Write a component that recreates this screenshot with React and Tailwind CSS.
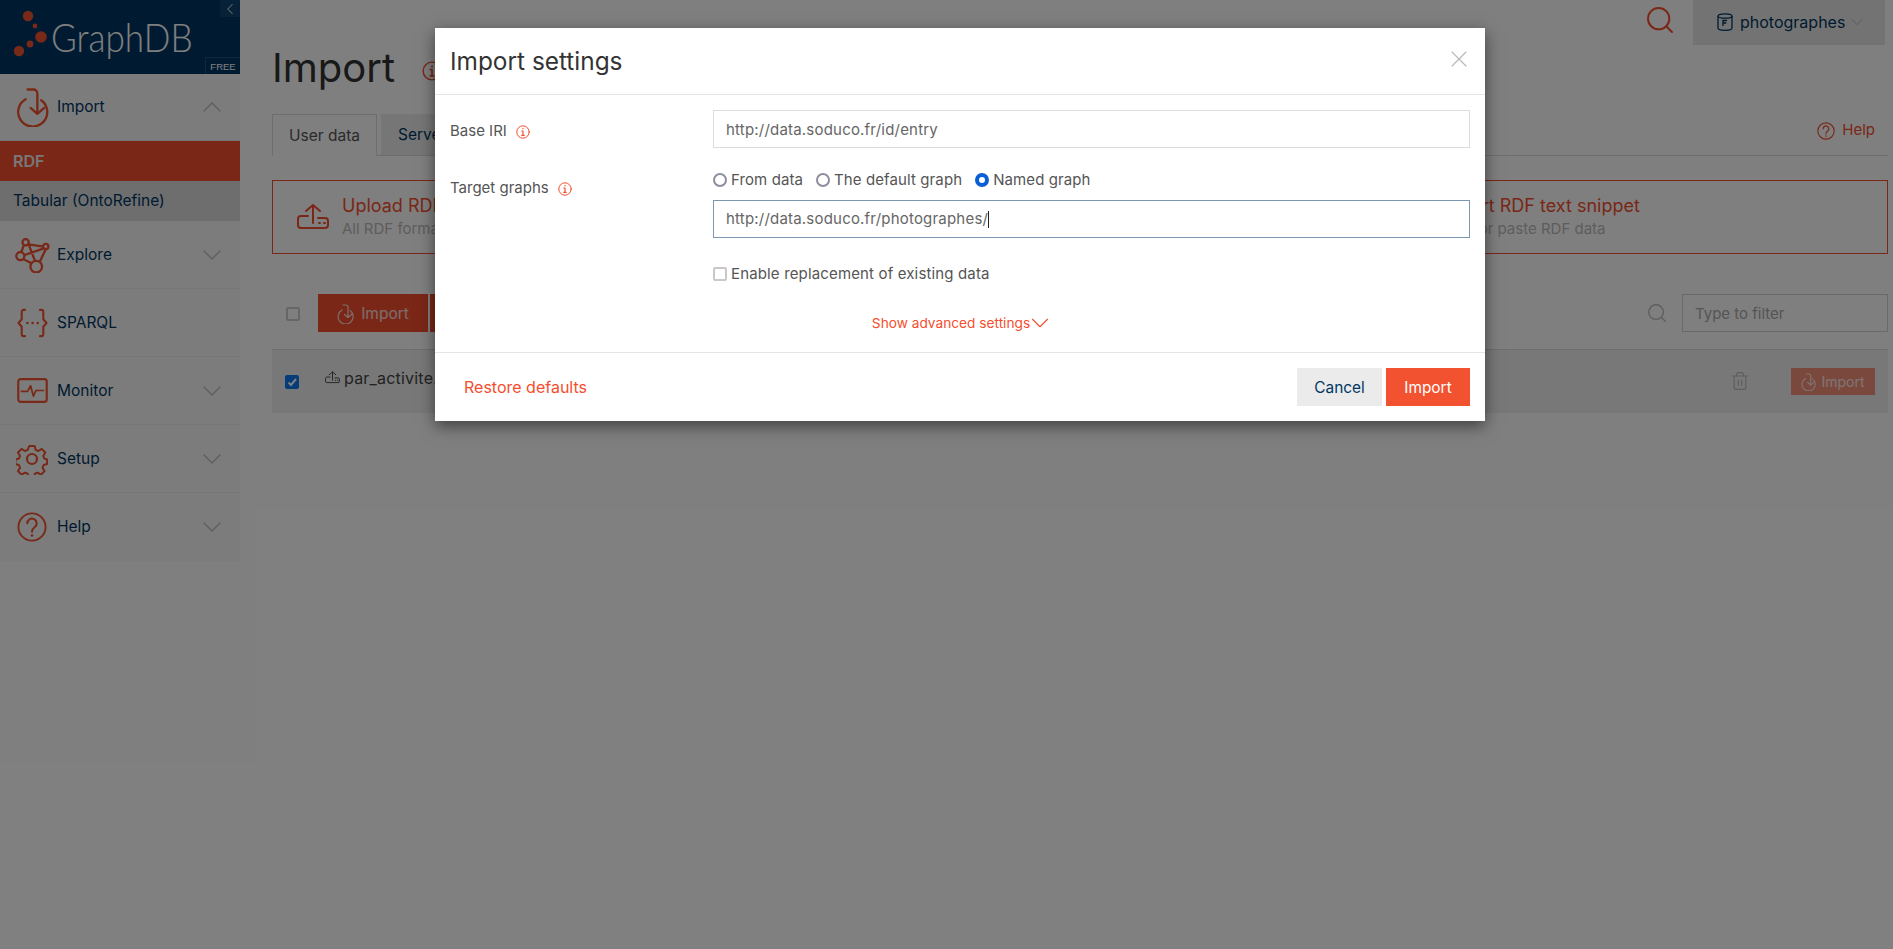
import { ChevronDown, ChevronUp, ChevronLeft, Search, X, Trash2 } from "lucide-react"

const ImportIcon = ({ className }) => (
    <svg className={className} viewBox="0 0 34 40" fill="none" stroke="currentColor" strokeWidth="2.4" strokeLinecap="round" strokeLinejoin="round">
        <path d="M10 12 A15 15 0 1 0 26 13" />
        <path d="M12 2 h6 a4 4 0 0 1 4 4 v20" />
        <path d="M15 21 l7 6 l7 -6" />
    </svg>
)

const UploadIcon = ({ className }) => (
    <svg className={className} viewBox="0 0 32 28" fill="none" stroke="currentColor" strokeWidth="2" strokeLinecap="round" strokeLinejoin="round">
        <path d="M16 20 V2 M9 8 l7 -6 l7 6" />
        <path d="M11 13 H4 a3 3 0 0 0 -3 3 v6 a3 3 0 0 0 3 3 h24 a3 3 0 0 0 3 -3 v-4 a3 3 0 0 0 -3 -3 h-7" />
        <path d="M22 20 h1 M27 20 h1" />
    </svg>
)

const InfoIcon = ({ className }) => (
    <svg className={className} viewBox="0 0 14 14" fill="none" stroke="currentColor" strokeWidth="1" strokeLinecap="round">
        <circle cx="7" cy="7" r="6.2" />
        <path d="M7 6 v4 M5.8 10.4 h2.4 M5.8 6 h1.2" strokeWidth="1.2" />
        <circle cx="7" cy="3.8" r="0.7" fill="currentColor" stroke="none" />
    </svg>
)

const ExploreIcon = ({ className }) => (
    <svg className={className} viewBox="0 0 34 34" fill="none" stroke="currentColor" strokeWidth="2.2">
        <circle cx="11" cy="5" r="3" />
        <circle cx="30" cy="9" r="2.5" />
        <circle cx="6" cy="18" r="3.8" />
        <circle cx="21" cy="28" r="5.5" />
        <path d="M13.5 7 L28 9 M9 8 L7 14.5 M13.5 6 L20 23 M27.5 11 L10 17 M30 11.5 L24 24 M9 21 L17 25" />
    </svg>
)

const SparqlIcon = ({ className }) => (
    <svg className={className} viewBox="0 0 34 32" fill="none" stroke="currentColor" strokeWidth="2.2" strokeLinecap="round" strokeLinejoin="round">
        <path d="M9 2 H7.5 a2 2 0 0 0 -2 2 v8 l-3.5 4 l3.5 4 v8 a2 2 0 0 0 2 2 H9" />
        <path d="M25 2 h1.5 a2 2 0 0 1 2 2 v8 l3.5 4 l-3.500 4 v8 a2 2 0 0 1 -2 2 H25" />
        <path d="M11.5 16 h.1 M17 16 h.1 M22.5 16 h.1" strokeWidth="2.6" />
    </svg>
)

const MonitorIcon = ({ className }) => (
    <svg className={className} viewBox="0 0 32 26" fill="none" stroke="currentColor" strokeWidth="2.2" strokeLinecap="round" strokeLinejoin="round">
        <rect x="1.2" y="1.2" width="29.6" height="23.6" rx="2.5" />
        <path d="M4.5 14 h6.5 l3 -6 l3 11 l2.5 -6 h8" strokeWidth="1.8" />
    </svg>
)

const GearIcon = ({ className }) => (
    <svg className={className} viewBox="0 0 32 32" fill="none" stroke="currentColor" strokeWidth="2.2" strokeLinejoin="round">
        <circle cx="16" cy="16" r="5" />
        <path d="M13 1.500 h6 l1 4.300 l3 1.300 l3.800 -2.300 l4 4 l-2.300 3.800 l1.300 3 l3 1 v5 l-3.800 1 l-1.300 3 l2.300 3.800 l-4 4 l-3.800 -2.300 l-3 1.300 l-1 3.800 h-6 l-1 -3.800 l-3 -1.300 l-3.800 2.300 l-4 -4 l2.300 -3.800 l-1.300 -3 l-3.800 -1 v-5 l3.800 -1 l1.300 -3 l-2.300 -3.800 l4 -4 l3.800 2.300 l3 -1.300 z" transform="translate(1.6 1.6) scale(0.9)" />
    </svg>
)

const HelpIcon = ({ className }) => (
    <svg className={className} viewBox="0 0 32 32" fill="none" stroke="currentColor" strokeWidth="2" strokeLinecap="round">
        <circle cx="16" cy="16" r="14.500" />
        <path d="M11 12 a5 5 0 1 1 8 4 c-2 1.500 -3 2.500 -3 5" strokeWidth="2.200" />
        <circle cx="16" cy="25" r="1.400" fill="currentColor" stroke="none" />
    </svg>
)

const RepoIcon = ({ className }) => (
    <svg className={className} viewBox="0 0 16 18" fill="none" stroke="currentColor" strokeWidth="1.300">
        <ellipse cx="8" cy="3" rx="7" ry="2.200" />
        <path d="M1 3 v12 c0 1.500 3 2.300 7 2.300 s7 -.8 7 -2.300 V3" />
        <path d="M6 13 V7.500 h4 M6 10 h3.200" />
    </svg>
)

const NavItem = ({ icon: Icon, iconClass, label, open, noChevron, rowClass }) => (
    <div className={`${rowClass} flex items-center pl-[16px] pr-[12px] border-b border-[#ededed] last:border-b-0`}>
        <div className="w-[32px] flex justify-center shrink-0">
            <Icon className={`${iconClass} shrink-0 text-[#f2522f]`} />
        </div>
        <span className="ml-[9px] flex-1 text-[15.5px] text-[#003663]">{label}</span>
        {!noChevron && (open
            ? <ChevronUp className="w-[32px] h-[32px] text-[#bdbdbd]" strokeWidth={1} />
            : <ChevronDown className="w-[32px] h-[32px] text-[#bdbdbd]" strokeWidth={1} />)}
    </div>
)

const Sidebar = () => (
    <aside className="w-[240px] shrink-0 self-start bg-[#f8f8f8]">
        <div className="relative h-[74px] bg-[#003663]">
            <svg className="absolute left-[12px] top-[10px] w-[38px] h-[48px]" viewBox="0 0 38 48" fill="#f2522f">
                <circle cx="16" cy="6" r="5.200" />
                <circle cx="23" cy="16" r="2.400" />
                <circle cx="29" cy="27" r="5.800" />
                <circle cx="18" cy="34" r="3.400" />
                <circle cx="7" cy="41" r="5.200" />
            </svg>
            <span className="absolute left-[51px] top-[13px] text-[39px] leading-[48px] font-light text-white font-['Lato',sans-serif] scale-x-[0.9] origin-left">GraphDB</span>
            <span className="absolute right-0 bottom-0 w-[35px] h-[17px] border-l border-t border-[#1b4f7c] text-[9.5px] leading-[17px] text-center text-white font-['Liberation_Sans',sans-serif]">FREE</span>
            <span className="absolute right-0 top-0 w-[20px] h-[17px] bg-[#0d4270] flex items-center justify-center">
                <ChevronLeft className="w-[18px] h-[18px] text-[#d8d8d8]" strokeWidth={1.4} />
            </span>
        </div>
        <NavItem rowClass="h-[67px]" icon={ImportIcon} iconClass="w-[33px] h-[40px]" label="Import" open />
        <div className="h-[40px] bg-[#f44e2e] pl-[13px] flex items-center text-[16px] font-semibold text-[#f0f0f0]">RDF</div>
        <div className="h-[40px] bg-[#dcdcdc] pl-[13px] flex items-center text-[15.5px] text-[#003663]">Tabular (OntoRefine)</div>
        <NavItem rowClass="h-[68px]" icon={ExploreIcon} iconClass="w-[36px] h-[36px]" label="Explore" />
        <NavItem rowClass="h-[68px]" icon={SparqlIcon} iconClass="w-[33px] h-[30px]" label="SPARQL" noChevron />
        <NavItem rowClass="h-[68px]" icon={MonitorIcon} iconClass="w-[31px] h-[25px]" label="Monitor" />
        <NavItem rowClass="h-[68px]" icon={GearIcon} iconClass="w-[32px] h-[32px]" label="Setup" />
        <NavItem rowClass="h-[68px]" icon={HelpIcon} iconClass="w-[30px] h-[30px]" label="Help" />
    </aside>
)

const ActionCard = ({ title, sub }) => (
    <div className="flex-1 h-[74px] border border-[#f44e2e] flex items-center pl-[24px]">
        <UploadIcon className="w-[32px] h-[28px] text-[#f44e2e] shrink-0" />
        <div className="ml-[13px] -mt-[2px]">
            <div className="text-[18px] leading-[24px] text-[#f44e2e]">{title}</div>
            <div className="text-[15px] leading-[21px] text-[#bbb]">{sub}</div>
        </div>
    </div>
)

const Main = () => (
    <main className="flex-1 pl-[32px] pr-[5px]">
        <div className="h-[45px] flex justify-end">
            <Search className="w-[32px] h-[32px] mt-[4px] mr-[17px] text-[#f44e2e]" strokeWidth={1.500} />
            <div className="w-[192px] h-[45px] bg-[#e6e6e6] flex items-center pl-[24px] pb-[2px] mr-[3px]">
                <RepoIcon className="w-[16px] h-[18px] text-[#003663]" />
                <span className="ml-[7px] text-[16px] text-[#003663]">photographes</span>
                <ChevronDown className="ml-[2px] w-[20px] h-[20px] text-[#bbb]" strokeWidth={1.200} />
            </div>
        </div>
        <div className="flex items-center h-[44px] mt-[1px]">
            <h1 className="text-[40px] leading-[44px] text-[#333]">Import</h1>
            <InfoIcon className="ml-[27px] mt-[6px] w-[20px] h-[20px] text-[#f44e2e]" />
        </div>
        <div className="mt-[24px] h-[42px] flex items-end border-b border-[#dcdcdc]">
            <div className="h-[42px] w-[105px] border border-b-0 border-[#dcdcdc] bg-white flex items-center justify-center text-[15.5px] text-[#555] -mb-px pt-[1px]">User data</div>
            <div className="h-[41px] w-[150px] ml-[4px] bg-[#ececec] pl-[17px] pt-[1px] flex items-center text-[15.5px] text-[#003663]">Server files</div>
            <div className="ml-auto h-[42px] -mt-[9px] pb-[7px] flex items-center pr-[13px] text-[15px] text-[#f44e2e]">
                <HelpIcon className="w-[18px] h-[18px] mr-[7px]" />Help
            </div>
        </div>
        <div className="mt-[24px] flex gap-[30px]">
            <ActionCard title="Upload RDF files" sub="All RDF formats, up to 200 MB" />
            <ActionCard title="Get RDF data from a URL" sub="All RDF formats" />
            <ActionCard title="Import RDF text snippet" sub="Type or paste RDF data" />
        </div>
        <div className="mt-[40px] h-[38px] flex items-center">
            <span className="ml-[14px] mt-[2px] w-[14px] h-[14px] border-2 border-[#ccc] rounded-[2px]" />
            <div className="ml-[18px] w-[110px] h-[38px] pt-[2px] bg-[#f44e2e] flex items-center justify-center text-[15.5px] text-white/80">
                <ImportIcon className="w-[17px] h-[20px] mr-[7px]" />Import
            </div>
            <div className="ml-[2px] w-[40px] h-[38px] bg-[#f44e2e]" />
            <Search className="ml-auto w-[22px] h-[22px] text-[#bbb]" strokeWidth={1.500} />
            <div className="ml-[14px] w-[206px] h-[38px] border border-[#d2d2d2] pl-[12px] pt-[2px] flex items-center text-[15px] text-[#aaa]">Type to filter</div>
        </div>
        <div className="mt-[17px] h-[64px] bg-[#f0f0f0] border-t border-[#dcdcdc] flex items-center">
            <span className="ml-[13px] mt-[1px] w-[14px] h-[14px] rounded-[2px] bg-[#0d78f2] flex items-center justify-center">
                <svg className="w-[10px] h-[10px]" viewBox="0 0 10 10" fill="none" stroke="white" strokeWidth="2"><path d="M1.500 5.500 l2.500 2.500 l5 -6" /></svg>
            </span>
            <UploadIcon className="ml-[26px] -mt-[8px] w-[15px] h-[13px] text-[#444]" />
            <span className="ml-[4px] -mt-[8px] text-[16px] tracking-[0.2px] text-[#444]">par_activite.ttl</span>
            <Trash2 className="ml-auto -mt-[2px] w-[20px] h-[22px] text-[#bbb]" strokeWidth={1.400} />
            <div className="ml-[41px] mr-[13px] w-[84px] h-[27px] bg-[#f7917c] flex items-center justify-center text-[14px] text-white/80">
                <ImportIcon className="w-[15px] h-[18px] mr-[5px]" />Import
            </div>
        </div>
    </main>
)

const Modal = () => (
    <div className="absolute inset-0 bg-black/50 flex justify-center items-start pt-[28px] pl-[27px] text-[15px]">
        <div className="w-[1050px] bg-white shadow-[0_5px_15px_rgba(0,0,0,0.5)]">
            <div className="h-[67px] border-b border-[#e5e5e5] px-[15px] flex items-center justify-between">
                <h2 className="text-[24.4px] text-[#333]">Import settings</h2>
                <X className="w-[28px] h-[28px] text-[#b8b8b8] -mr-[3px] -mt-[4px]" strokeWidth={1} />
            </div>
            <div className="px-[15px] pt-[15px]">
                <div className="flex">
                    <label className="w-[263px] pt-[11px] text-[#555] flex items-start leading-[20px]">
                        Base IRI<InfoIcon className="ml-[9px] mt-[4px] w-[14px] h-[14px] text-[#f44e2e]" />
                    </label>
                    <div className="flex-1 h-[38px] border border-[#dcdcdc] pl-[12px] pt-[2px] flex items-center text-[#666] tracking-[0.2px]">http://data.soduco.fr/id/entry</div>
                </div>
                <div className="flex mt-[22px]">
                    <label className="w-[263px] pt-[8px] text-[#555] flex items-start leading-[20px]">
                        Target graphs<InfoIcon className="ml-[9px] mt-[4px] w-[14px] h-[14px] text-[#f44e2e]" />
                    </label>
                    <div className="flex-1">
                        <div className="h-[20px] flex items-center text-[#555] tracking-[0.1px]">
                            <span className="w-[14px] h-[14px] rounded-full border-2 border-[#8e8e9e]" />
                            <span className="ml-[4px]">From data</span>
                            <span className="ml-[13px] w-[14px] h-[14px] rounded-full border-2 border-[#8e8e9e]" />
                            <span className="ml-[4px]">The default graph</span>
                            <span className="ml-[13px] w-[14px] h-[14px] rounded-full border-[4px] border-[#0a5fd6]" />
                            <span className="ml-[4px]">Named graph</span>
                        </div>
                        <div className="mt-[10px] h-[38px] border border-[#7c97b1] pl-[12px] pt-[1px] flex items-center text-[#666] tracking-[0.2px]">
                            http://data.soduco.fr/photographes/<span className="w-px h-[17px] bg-[#222]" />
                        </div>
                        <div className="mt-[26px] h-[20px] flex items-center text-[#555] tracking-[0.15px]">
                            <span className="w-[14px] h-[14px] border-2 border-[#c8c8c8] rounded-[2px]" />
                            <span className="ml-[4px]">Enable replacement of existing data</span>
                        </div>
                    </div>
                </div>
                <div className="mt-[29px] h-[20px] flex items-center justify-center text-[13.7px] text-[#f44e2e]">
                    Show advanced settings<ChevronDown className="-ml-[5px] -mr-[7px] w-[30px] h-[30px] shrink-0" strokeWidth={0.9} />
                </div>
            </div>
            <div className="mt-[19px] h-[69px] border-t border-[#e5e5e5] px-[15px] flex items-center">
                <span className="ml-[14px] text-[16px] text-[#f44e2e]">Restore defaults</span>
                <div className="ml-auto w-[85px] h-[38px] pt-[2px] bg-[#ebebeb] flex items-center justify-center text-[15.4px] text-[#003663]">Cancel</div>
                <div className="ml-[4px] w-[84px] h-[38px] pt-[2px] bg-[#f2522f] flex items-center justify-center text-[15.4px] text-white">Import</div>
            </div>
        </div>
    </div>
)

export default function App() {
    return (
        <div className="relative h-[949px] overflow-hidden bg-white font-['Inter',sans-serif] flex">
            <Sidebar />
            <Main />
            <Modal />
        </div>
    )
}
